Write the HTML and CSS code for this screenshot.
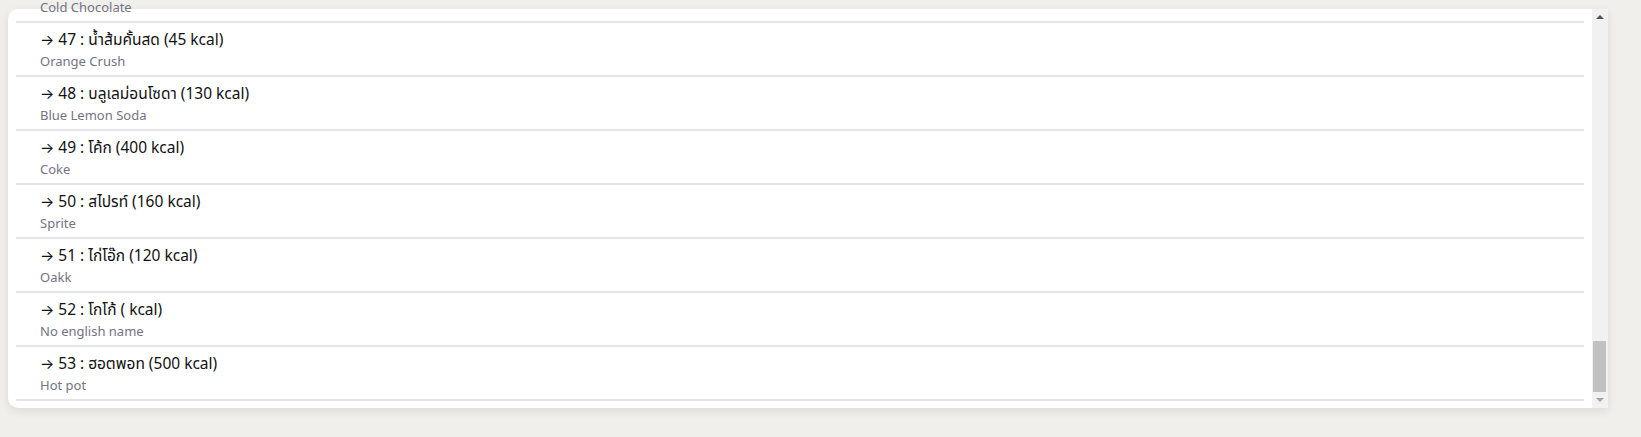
FILE: index.html
```html
<!DOCTYPE html>
<html lang="th">
<head>
<meta charset="utf-8">
<title>Menu list</title>
<link rel="stylesheet" href="styles.css">
</head>
<body>
<div class="page">
  <div class="card">
    <div class="list">
      <div class="item"><div class="title"><span class="arrow">→</span> 45 : ช็อกโกแลตร้อน (180 kcal)</div><div class="sub">Hot Chocolate</div></div>
      <div class="item"><div class="title"><span class="arrow">→</span> 46 : ช็อกโกแลตเย็น (220 kcal)</div><div class="sub">Cold Chocolate</div></div>
      <div class="item"><div class="title"><span class="arrow">→</span> 47 : น้ำส้มคั้นสด (45 kcal)</div><div class="sub">Orange Crush</div></div>
      <div class="item"><div class="title"><span class="arrow">→</span> 48 : บลูเลม่อนโซดา (130 kcal)</div><div class="sub">Blue Lemon Soda</div></div>
      <div class="item"><div class="title"><span class="arrow">→</span> 49 : โค้ก (400 kcal)</div><div class="sub">Coke</div></div>
      <div class="item"><div class="title"><span class="arrow">→</span> 50 : สไปรท์ (160 kcal)</div><div class="sub">Sprite</div></div>
      <div class="item"><div class="title"><span class="arrow">→</span> 51 : ไก่โอ๊ก (120 kcal)</div><div class="sub">Oakk</div></div>
      <div class="item"><div class="title"><span class="arrow">→</span> 52 : โกโก้ ( kcal)</div><div class="sub">No english name</div></div>
      <div class="item"><div class="title"><span class="arrow">→</span> 53 : ฮอตพอท (500 kcal)</div><div class="sub">Hot pot</div></div>
    </div>
    <div class="scrollbar">
      <div class="sb-btn"><span class="arrow-up"></span></div>
      <div class="sb-track"><div class="sb-thumb"></div></div>
      <div class="sb-btn"><span class="arrow-down"></span></div>
    </div>
  </div>
</div>
</body>
</html>
```
FILE: styles.css
```css
html, body {
  margin: 0;
  padding: 0;
  background: #f0efeb;
  font-family: "Segoe UI", "Noto Sans", "Noto Sans Thai", "Open Sans", sans-serif;
}
.page {
  padding: 9px 33px 0 8px;
  height: 437px;
  box-sizing: border-box;
}
.card {
  display: flex;
  height: 399px;
  background: #ffffff;
  border-radius: 10px 0 0 10px;
  box-shadow: 0 3px 10px rgba(0, 0, 0, 0.09);
}
.list {
  flex: 1;
  display: flex;
  flex-direction: column;
  justify-content: flex-end;
  padding: 0 8px 7px 8px;
  min-width: 0;
}
.item {
  flex: none;
  box-sizing: border-box;
  height: 54px;
  padding: 5px 24px 0 24px;
  border-bottom: 2px solid #e4e4ea;
}
.title {
  height: 22px;
  font-size: 15.5px;
  line-height: 22px;
  color: #111111;
  white-space: nowrap;
}
.arrow {
  font-family: "Inter", sans-serif;
  font-size: 15px;
  line-height: 1;
}
.sub {
  margin-top: 2px;
  font-size: 13px;
  line-height: 18px;
  color: #737382;
  white-space: nowrap;
}
.scrollbar {
  width: 16px;
  flex: none;
  display: flex;
  flex-direction: column;
  background: #f1f1f1;
}
.sb-btn {
  height: 16px;
  flex: none;
  display: flex;
  align-items: center;
  justify-content: center;
}
.arrow-up {
  width: 0;
  height: 0;
  border-left: 4px solid transparent;
  border-right: 4px solid transparent;
  border-bottom: 4px solid #505050;
}
.arrow-down {
  width: 0;
  height: 0;
  border-left: 4px solid transparent;
  border-right: 4px solid transparent;
  border-top: 4px solid #a3a3a3;
}
.sb-track {
  flex: 1;
  display: flex;
  flex-direction: column;
  justify-content: flex-end;
}
.sb-thumb {
  height: 51px;
  margin: 0 2px 0 1px;
  background: #c1c1c1;
}
```
